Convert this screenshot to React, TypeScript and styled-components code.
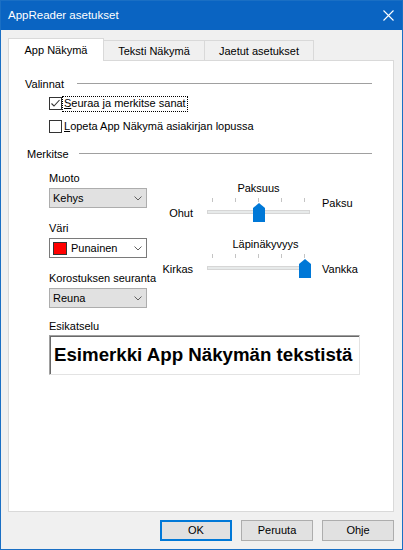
import React from "react";
import styled, { createGlobalStyle } from "styled-components";

const Global = createGlobalStyle`
  html, body { margin: 0; padding: 0; background: #f0f0f0; }
  body {
    font-family: "Liberation Sans", Arial, sans-serif;
    font-size: 11px;
    color: #000;
  }
  * { box-sizing: border-box; }
`;

const Window = styled.div`
  width: 403px;
  height: 550px;
  border: 1px solid #1a6fc4;
  background: #f0f0f0;
  display: flex;
  flex-direction: column;
`;

const TitleBar = styled.div`
  height: 29px;
  flex: none;
  background: #0a64c2;
  color: #fff;
  display: flex;
  align-items: center;
  padding-left: 7px;
  font-size: 11.5px;
`;

const TitleText = styled.div`
  flex: 1;
  padding-bottom: 1px;
`;

const CloseBox = styled.div`
  width: 28px;
  height: 29px;
  display: flex;
  align-items: center;
  justify-content: center;
`;

const Content = styled.div`
  flex: 1;
  display: flex;
  flex-direction: column;
  padding: 8px 8px 0 7px;
  min-height: 0;
`;

const TabStrip = styled.div`
  height: 23px;
  flex: none;
  display: flex;
  align-items: flex-end;
  margin-bottom: -1px;
`;

const Tab = styled.div<{ $active?: boolean; $w: number }>`
  width: ${(p) => p.$w}px;
  height: ${(p) => (p.$active ? 23 : 20)}px;
  margin-bottom: ${(p) => (p.$active ? 0 : 1)}px;
  margin-left: -1px;
  &:first-child { margin-left: 0; }
  border: 1px solid #d9d9d9;
  border-bottom: none;
  background: ${(p) => (p.$active ? "#fff" : "#f0f0f0")};
  display: flex;
  align-items: center;
  justify-content: center;
  padding-bottom: ${(p) => (p.$active ? 1 : 0)}px;
  position: relative;
  z-index: ${(p) => (p.$active ? 2 : 0)};
  white-space: nowrap;
`;

const Panel = styled.div`
  flex: 1;
  position: relative;
  z-index: 1;
  background: #fff;
  border: 1px solid #d9d9d9;
  padding: 15px 21px 0 16px;
  display: flex;
  flex-direction: column;
`;

const GroupHeader = styled.div<{ $indent?: number; $top?: number }>`
  height: 16px;
  display: flex;
  align-items: center;
  padding-left: ${(p) => p.$indent ?? 0}px;
  margin-top: ${(p) => p.$top ?? 0}px;
`;

const GroupLine = styled.div<{ $gap: number }>`
  flex: 1;
  height: 1px;
  margin-left: ${(p) => p.$gap}px;
  margin-top: -1px;
  background: #a0a0a0;
`;

const OptionList = styled.div`
  display: flex;
  flex-direction: column;
  padding-left: 24px;
`;

const CheckRow = styled.div`
  height: 23px;
  display: flex;
  align-items: center;
`;

const Box = styled.div`
  width: 13px;
  height: 13px;
  border: 1px solid #333;
  background: #fff;
  display: flex;
  align-items: center;
  justify-content: center;
  flex: none;
`;

const CheckLabel = styled.span<{ $focus?: boolean }>`
  margin-left: 1px;
  padding: 0 1px 1px;
  outline: ${(p) => (p.$focus ? "1px dotted #000" : "none")};
  outline-offset: 0;
  line-height: 13px;
`;

const MarkBody = styled.div`
  display: flex;
  margin-top: 8px;
  padding-left: 24px;
`;

const LeftColumn = styled.div`
  width: 98px;
  flex: none;
  display: flex;
  flex-direction: column;
  gap: 12px;
`;

const Field = styled.div`
  display: flex;
  flex-direction: column;
`;

const FieldLabel = styled.div`
  height: 16px;
  line-height: 16px;
  white-space: nowrap;
`;

const Combo = styled.div<{ $white?: boolean }>`
  height: 20px;
  width: 98px;
  margin-top: 2px;
  display: flex;
  align-items: center;
  padding: 0 4px 0 3px;
  background: ${(p) => (p.$white ? "#fff" : "#e1e1e1")};
  border: 1px solid ${(p) => (p.$white ? "#7a7a7a" : "#adadad")};
`;

const ComboText = styled.span`
  flex: 1;
  padding-bottom: 1px;
`;

const Swatch = styled.span<{ $color: string }>`
  width: 14px;
  height: 13px;
  background: ${(p) => p.$color};
  border: 1px solid #333;
  margin-right: 4px;
  flex: none;
`;

const SliderColumn = styled.div`
  display: flex;
  flex-direction: column;
  gap: 12px;
  margin-top: 10px;
`;

const SliderBlock = styled.div`
  display: grid;
  grid-template-columns: 60px 103px auto;
  grid-template-rows: 16px 26px;
  row-gap: 2px;
`;

const SliderTitle = styled.div<{ $shift?: number }>`
  grid-column: 2;
  grid-row: 1;
  height: 16px;
  line-height: 16px;
  text-align: center;
  white-space: nowrap;
  padding-left: ${(p) => p.$shift ?? 0}px;
`;

const SideLabel = styled.div<{ $side: "left" | "right"; $top: number }>`
  grid-row: 2;
  grid-column: ${(p) => (p.$side === "left" ? 1 : 3)};
  height: 16px;
  line-height: 16px;
  margin-top: ${(p) => p.$top}px;
  white-space: nowrap;
  text-align: ${(p) => (p.$side === "left" ? "right" : "left")};
  padding-${(p) => (p.$side === "left" ? "right" : "left")}: ${(p) =>
    p.$side === "left" ? 14 : 12}px;
`;

const Slider = styled.div`
  grid-row: 2;
  grid-column: 2;
  position: relative;
  height: 26px;
  display: flex;
  flex-direction: column;
`;

const Ticks = styled.div`
  height: 4px;
  display: flex;
  justify-content: space-between;
  padding: 0 5px 0 5px;
`;

const Tick = styled.span`
  width: 1px;
  height: 4px;
  background: #c4c4c4;
`;

const Track = styled.div`
  height: 4px;
  margin-top: 8px;
  background: #e7eaea;
  border: 1px solid #d6d6d6;
`;

const Thumb = styled.svg`
  position: absolute;
  top: 5px;
  width: 12px;
  height: 19px;
`;

const PreviewLabel = styled.div`
  margin-top: 10px;
  padding-left: 24px;
  height: 16px;
  line-height: 16px;
`;

const PreviewBox = styled.div`
  margin: 1px 0 0 24px;
  width: 311px;
  height: 40px;
  border: 1px solid;
  border-color: #a0a0a0 #e3e3e3 #e3e3e3 #a0a0a0;
  box-shadow: inset 1px 1px 0 #696969;
  display: flex;
  align-items: center;
  padding: 0 0 1px 4px;
  font-family: "Liberation Sans", Arial, sans-serif;
  font-weight: bold;
  font-size: 18.7px;
  white-space: nowrap;
  overflow: hidden;
`;

const Footer = styled.div`
  height: 37px;
  flex: none;
  display: flex;
  justify-content: flex-end;
  gap: 9px;
  padding-top: 8px;
`;

const Button = styled.div<{ $default?: boolean }>`
  width: 72px;
  height: 21px;
  display: flex;
  align-items: center;
  justify-content: center;
  background: #e1e1e1;
  border: 1px solid ${(p) => (p.$default ? "#0078d7" : "#adadad")};
  box-shadow: ${(p) => (p.$default ? "inset 0 0 0 1px #0078d7" : "none")};
  padding-bottom: 1px;
`;

const Chevron = () => (
  <svg width="8" height="5" viewBox="0 0 8 5">
    <path d="M0.5 0.5 L4 4 L7.5 0.5" fill="none" stroke="#606060" strokeWidth="1" />
  </svg>
);

const Check = () => (
  <svg width="11" height="11" viewBox="0 0 11 11">
    <path d="M1.5 5.5 L4 8 L9.5 2" fill="none" stroke="#333" strokeWidth="1.1" />
  </svg>
);

const CloseIcon = () => (
  <svg width="11" height="11" viewBox="0 0 11 11">
    <path d="M0.5 0.5 L10.5 10.5 M10.5 0.5 L0.5 10.5" stroke="#fff" strokeWidth="1.1" />
  </svg>
);

type SliderProps = {
  value: number;
  max: number;
};

const TrackBar: React.FC<SliderProps> = ({ value, max }) => {
  const ticks = Array.from({ length: max + 1 });
  const left = 5.5 + (value / max) * 92 - 6;
  return (
    <Slider>
      <Ticks>
        {ticks.map((_, i) => (
          <Tick key={i} />
        ))}
      </Ticks>
      <Track />
      <Thumb viewBox="0 0 12 19" style={{ left }}>
        <path d="M6 0 L12 5 V19 H0 V5 Z" fill="#0078d7" />
      </Thumb>
    </Slider>
  );
};

export default function App() {
  return (
    <>
      <Global />
      <Window>
        <TitleBar>
          <TitleText>AppReader asetukset</TitleText>
          <CloseBox>
            <CloseIcon />
          </CloseBox>
        </TitleBar>
        <Content>
          <TabStrip>
            <Tab $active $w={96}>App Näkymä</Tab>
            <Tab $w={102}>Teksti Näkymä</Tab>
            <Tab $w={110}>Jaetut asetukset</Tab>
          </TabStrip>
          <Panel>
            <GroupHeader>
              Valinnat
              <GroupLine $gap={13} />
            </GroupHeader>
            <OptionList>
              <CheckRow>
                <Box>
                  <Check />
                </Box>
                <CheckLabel $focus>
                  <u>S</u>euraa ja merkitse sanat
                </CheckLabel>
              </CheckRow>
              <CheckRow>
                <Box />
                <CheckLabel>
                  <u>L</u>opeta App Näkymä asiakirjan lopussa
                </CheckLabel>
              </CheckRow>
            </OptionList>

            <GroupHeader $indent={2} $top={8}>
              Merkitse
              <GroupLine $gap={10} />
            </GroupHeader>
            <MarkBody>
              <LeftColumn>
                <Field>
                  <FieldLabel>Muoto</FieldLabel>
                  <Combo>
                    <ComboText>Kehys</ComboText>
                    <Chevron />
                  </Combo>
                </Field>
                <Field>
                  <FieldLabel>Väri</FieldLabel>
                  <Combo $white>
                    <Swatch $color="#ff0000" />
                    <ComboText>Punainen</ComboText>
                    <Chevron />
                  </Combo>
                </Field>
                <Field>
                  <FieldLabel>Korostuksen seuranta</FieldLabel>
                  <Combo>
                    <ComboText>Reuna</ComboText>
                    <Chevron />
                  </Combo>
                </Field>
              </LeftColumn>
              <SliderColumn>
                <SliderBlock>
                  <SliderTitle>Paksuus</SliderTitle>
                  <SideLabel $side="left" $top={7}>Ohut</SideLabel>
                  <TrackBar value={2} max={4} />
                  <SideLabel $side="right" $top={-3}>Paksu</SideLabel>
                </SliderBlock>
                <SliderBlock>
                  <SliderTitle $shift={14}>Läpinäkyvyys</SliderTitle>
                  <SideLabel $side="left" $top={7}>Kirkas</SideLabel>
                  <TrackBar value={4} max={4} />
                  <SideLabel $side="right" $top={7}>Vankka</SideLabel>
                </SliderBlock>
              </SliderColumn>
            </MarkBody>

            <PreviewLabel>Esikatselu</PreviewLabel>
            <PreviewBox>Esimerkki App Näkymän tekstistä</PreviewBox>
          </Panel>
          <Footer>
            <Button $default>OK</Button>
            <Button>Peruuta</Button>
            <Button>Ohje</Button>
          </Footer>
        </Content>
      </Window>
    </>
  );
}
